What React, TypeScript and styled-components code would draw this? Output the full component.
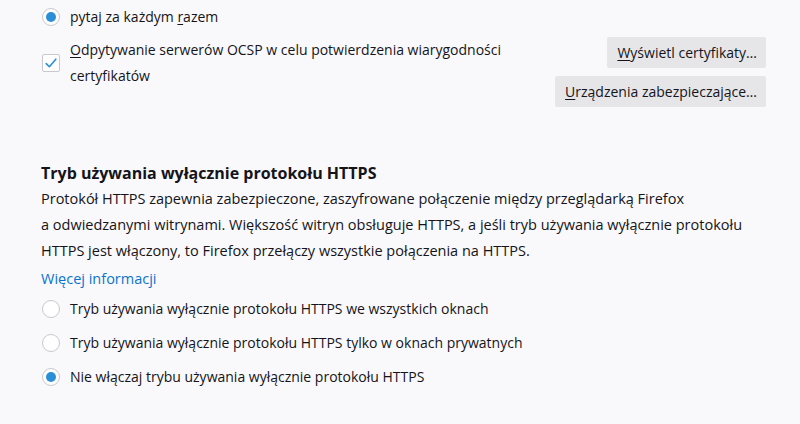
import React from "react";
import styled, { createGlobalStyle } from "styled-components";

const Global = createGlobalStyle`
  html, body { margin: 0; padding: 0; background: #f9f9fb; }
  body {
    font-family: "Segoe UI", "Open Sans", "Noto Sans", sans-serif;
    font-size: 14px;
    color: #15141a;
  }
`;

const Page = styled.div`
  width: 800px;
  height: 424px;
  box-sizing: border-box;
  padding: 4px 34px 0 41px;
  overflow: hidden;
  display: flex;
  flex-direction: column;
`;

const OptionRow = styled.label<{ $h?: number }>`
  display: flex;
  align-items: center;
  gap: 10px;
  height: ${(p) => p.$h ?? 26}px;
  line-height: 26px;
`;

const RadioCircle = styled.span<{ $on?: boolean }>`
  flex: none;
  width: 18px;
  height: 18px;
  margin-left: 1px;
  box-sizing: border-box;
  border-radius: 50%;
  border: 1px solid #c9c9cd;
  background: #fff;
  display: flex;
  align-items: center;
  justify-content: center;
  &::after {
    content: "";
    display: ${(p) => (p.$on ? "block" : "none")};
    width: 10px;
    height: 10px;
    border-radius: 50%;
    background: #2a8fd6;
  }
`;

const CheckRow = styled.div`
  display: flex;
  align-items: flex-start;
  justify-content: space-between;
  margin-top: 7px;
`;

const CheckLabel = styled.label`
  display: flex;
  align-items: center;
  gap: 10px;
  line-height: 26px;
  width: 470px;
`;

const CheckBox = styled.span`
  flex: none;
  width: 18px;
  height: 18px;
  margin-left: 1px;
  box-sizing: border-box;
  border: 1px solid #c9c9cd;
  border-radius: 2px;
  background: #fff;
  display: flex;
  align-items: center;
  justify-content: center;
`;

const Buttons = styled.div`
  display: flex;
  flex-direction: column;
  align-items: flex-end;
  gap: 8px;
`;

const Button = styled.button`
  height: 31px;
  padding: 0 9px 0 10px;
  border: none;
  border-radius: 2px;
  background: #e6e6e9;
  color: #15141a;
  font: inherit;
  font-size: 14px;
`;

const Key = styled.span`
  text-decoration: underline;
  text-underline-offset: 2px;
`;

const Heading = styled.h2`
  margin: 54px 0 0;
  font-size: 16px;
  font-weight: 700;
  line-height: 24px;
`;

const Para = styled.p`
  margin: 1px 0 0;
  font-size: 14.5px;
  line-height: 26px;
  white-space: nowrap;
`;

const Link = styled.a`
  color: #0a74d0;
  font-size: 14.5px;
  text-decoration: none;
  line-height: 26px;
  display: block;
  margin-top: 2px;
`;

const RadioList = styled.div`
  display: flex;
  flex-direction: column;
`;

const Check = () => (
  <svg width="14" height="14" viewBox="0 0 14 14">
    <path d="M2.2 7.6 L5.4 10.7 L11.8 3.2" fill="none" stroke="#2a8fd6" strokeWidth="1.6" strokeLinecap="round" strokeLinejoin="round" />
  </svg>
);

export default function App() {
  return (
    <>
      <Global />
      <Page>
        <OptionRow>
          <RadioCircle $on />
          <span>
            pytaj za każdym <Key>r</Key>azem
          </span>
        </OptionRow>
        <CheckRow>
          <CheckLabel>
            <CheckBox>
              <Check />
            </CheckBox>
            <span>
              <Key>O</Key>dpytywanie serwerów OCSP w celu potwierdzenia wiarygodności certyfikatów
            </span>
          </CheckLabel>
          <Buttons>
            <Button>
              <Key>W</Key>yświetl certyfikaty…
            </Button>
            <Button>
              <Key>U</Key>rządzenia zabezpieczające…
            </Button>
          </Buttons>
        </CheckRow>
        <Heading>Tryb używania wyłącznie protokołu HTTPS</Heading>
        <Para>
          Protokół HTTPS zapewnia zabezpieczone, zaszyfrowane połączenie między przeglądarką Firefox
          <br />
          a odwiedzanymi witrynami. Większość witryn obsługuje HTTPS, a jeśli tryb używania wyłącznie protokołu
          <br />
          HTTPS jest włączony, to Firefox przełączy wszystkie połączenia na HTTPS.
        </Para>
        <Link href="#">Więcej informacji</Link>
        <RadioList>
          <OptionRow $h={34}>
            <RadioCircle />
            <span>Tryb używania wyłącznie protokołu HTTPS we wszystkich oknach</span>
          </OptionRow>
          <OptionRow $h={34}>
            <RadioCircle />
            <span>Tryb używania wyłącznie protokołu HTTPS tylko w oknach prywatnych</span>
          </OptionRow>
          <OptionRow $h={34}>
            <RadioCircle $on />
            <span>Nie włączaj trybu używania wyłącznie protokołu HTTPS</span>
          </OptionRow>
        </RadioList>
      </Page>
    </>
  );
}
